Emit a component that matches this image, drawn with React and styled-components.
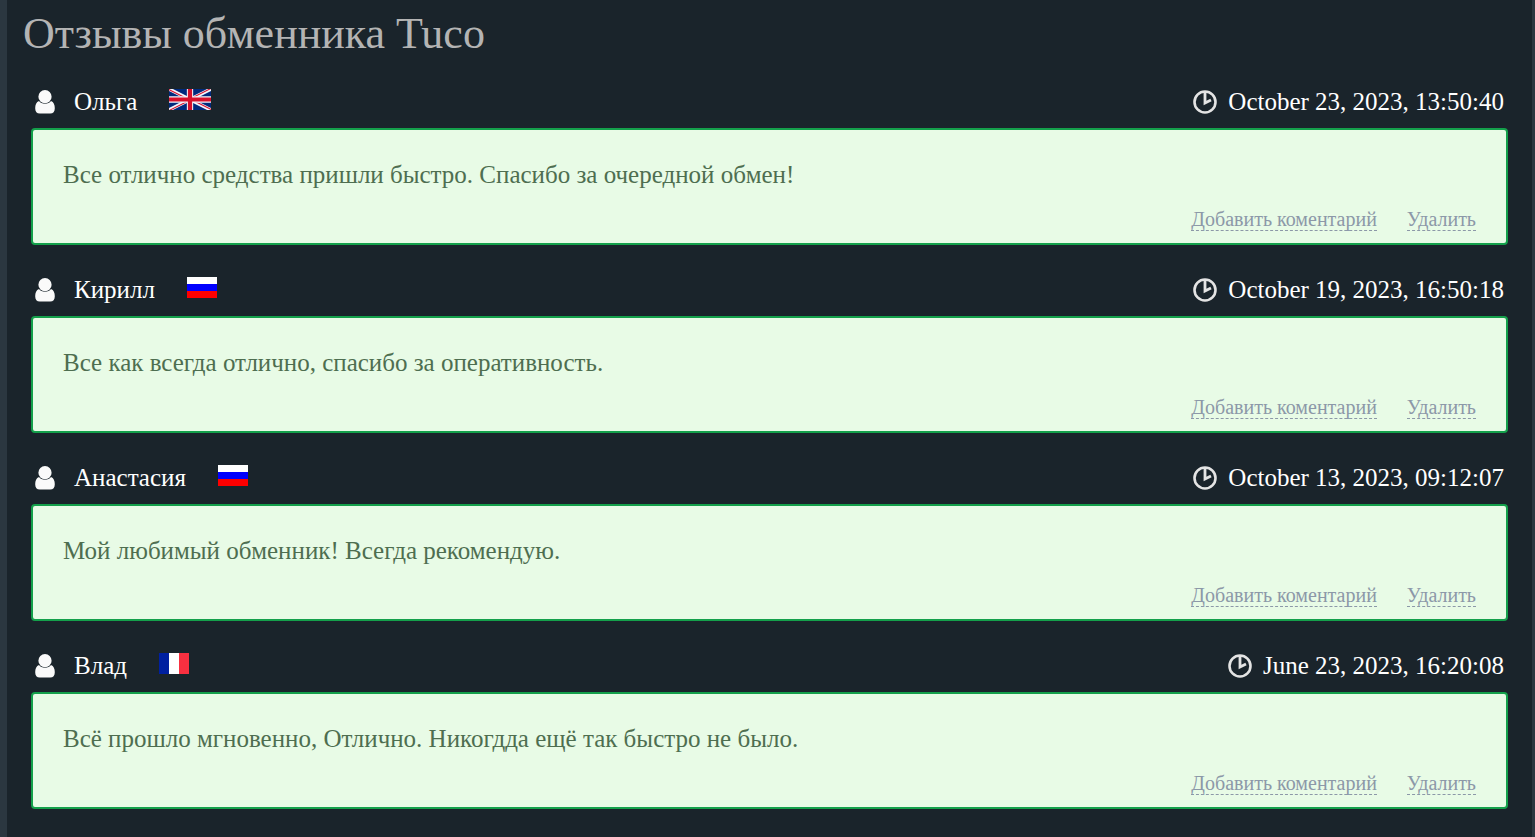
import React from 'react';
import styled, { createGlobalStyle } from 'styled-components';

const GlobalStyle = createGlobalStyle`
    body {
        margin: 0;
        background: #2b3740;
        font-family: "Liberation Serif", "Times New Roman", serif;
    }
`;

const Panel = styled.main`
    margin: 0 3px 0 7px;
    padding: 10px 24px 28px;
    background: #1a242b;
    box-sizing: border-box;
    min-height: 100vh;
`;

const Title = styled.h1`
    margin: 0 0 28px -8px;
    font-size: 44px;
    line-height: 48px;
    font-weight: 400;
    color: #b4b4b4;
`;

const List = styled.div`
    display: flex;
    flex-direction: column;
    gap: 29px;
`;

const Head = styled.header`
    display: flex;
    align-items: center;
    height: 32px;
    padding: 0 4px 10px;
    font-size: 25px;
    color: #ffffff;
`;

const Name = styled.span`
    margin: 0 32px 0 19px;
`;

const Time = styled.time`
    display: flex;
    align-items: center;
    gap: 11px;
    margin-left: auto;
`;

const Card = styled.div`
    box-sizing: border-box;
    padding: 30px 30px 12px;
    border: 2px solid #14a04b;
    border-radius: 4px;
    background: #e8fbe6;
`;

const Message = styled.p`
    margin: 0;
    font-size: 25px;
    line-height: 30px;
    color: #4e6e50;
`;

const Actions = styled.div`
    display: flex;
    justify-content: flex-end;
    gap: 30px;
    margin-top: 18px;
`;

const ActionLink = styled.a`
    font-size: 20px;
    line-height: 22px;
    color: #8c98a8;
    text-decoration: none;
    border-bottom: 1px dashed #8c98a8;
`;

const FlagIcon = styled.svg`
    display: block;
    margin-bottom: 6px;
`;

function UserIcon() {
    return (
        <svg width="20" height="24" viewBox="0 0 20 24" fill="#fafafa" aria-hidden="true">
            <circle cx="10" cy="6.700" r="6.600" />
            <path d="M4 11C1.300 12 .2 14.800.2 18.300c0 3.500 1.600 5.300 4.600 5.300h10.400c3 0 4.600-1.800 4.600-5.300 0-3.500-1.100-6.300-3.800-7.300C14.700 13 12.600 13.700 10 13.700S5.300 13 4 11z" />
        </svg>
    );
}

function ClockIcon() {
    return (
        <svg width="24" height="24" viewBox="0 0 24 24" fill="none" stroke="#e4e4e4" aria-hidden="true">
            <circle cx="12" cy="12" r="10.500" strokeWidth="2.600" />
            <path d="M12 2v11l6-3" strokeWidth="2.800" />
        </svg>
    );
}

function Flag({ country }) {
    if (country === 'gb') {
        return (
            <FlagIcon width="42" height="21" viewBox="0 0 60 30" role="img" aria-label="gb">
                <clipPath id="gb-corners">
                    <path d="M30 15h30v15zM30 15v15H0zM30 15H0V0zM30 15V0h30z" />
                </clipPath>
                <path d="M0 0h60v30H0z" fill="#012a7d" />
                <path d="M0 0l60 30m0-30L0 30" stroke="#f4f4fa" strokeWidth="5" />
                <path d="M0 0l60 30m0-30L0 30" stroke="#d8102c" strokeWidth="3" clipPath="url(#gb-corners)" />
                <path d="M30 0v30M0 15h60" stroke="#f4f4fa" strokeWidth="9" />
                <path d="M30 0v30M0 15h60" stroke="#d8102c" strokeWidth="6" />
            </FlagIcon>
        );
    }
    if (country === 'fr') {
        return (
            <FlagIcon width="30" height="21" viewBox="0 0 30 21" role="img" aria-label="fr">
                <path d="M0 0h10v21H0z" fill="#0020a0" />
                <path d="M10 0h10v21H10z" fill="#ffffff" />
                <path d="M20 0h10v21H20z" fill="#f83040" />
            </FlagIcon>
        );
    }
    return (
        <FlagIcon width="30" height="21" viewBox="0 0 30 21" role="img" aria-label="ru">
            <path d="M0 0h30v7H0z" fill="#ffffff" />
            <path d="M0 7h30v7H0z" fill="#0000fe" />
            <path d="M0 14h30v7H0z" fill="#fe0000" />
        </FlagIcon>
    );
}

const reviews = [
    { name: 'Ольга', country: 'gb', date: 'October 23, 2023, 13:50:40', text: 'Все отлично средства пришли быстро. Спасибо за очередной обмен!' },
    { name: 'Кирилл', country: 'ru', date: 'October 19, 2023, 16:50:18', text: 'Все как всегда отлично, спасибо за оперативность.' },
    { name: 'Анастасия', country: 'ru', date: 'October 13, 2023, 09:12:07', text: 'Мой любимый обменник! Всегда рекомендую.' },
    { name: 'Влад', country: 'fr', date: 'June 23, 2023, 16:20:08', text: 'Всё прошло мгновенно, Отлично. Никогдда ещё так быстро не было.' },
];

function Review({ name, country, date, text }) {
    return (
        <article>
            <Head>
                <UserIcon />
                <Name>{name}</Name>
                <Flag country={country} />
                <Time>
                    <ClockIcon />
                    {date}
                </Time>
            </Head>
            <Card>
                <Message>{text}</Message>
                <Actions>
                    <ActionLink href="#comment">Добавить коментарий</ActionLink>
                    <ActionLink href="#delete">Удалить</ActionLink>
                </Actions>
            </Card>
        </article>
    );
}

function App() {
    return (
        <>
            <GlobalStyle />
            <Panel>
                <Title>Отзывы обменника Tuco</Title>
                <List>
                    {reviews.map((review) => (
                        <Review key={review.date} {...review} />
                    ))}
                </List>
            </Panel>
        </>
    );
}

export default App;
